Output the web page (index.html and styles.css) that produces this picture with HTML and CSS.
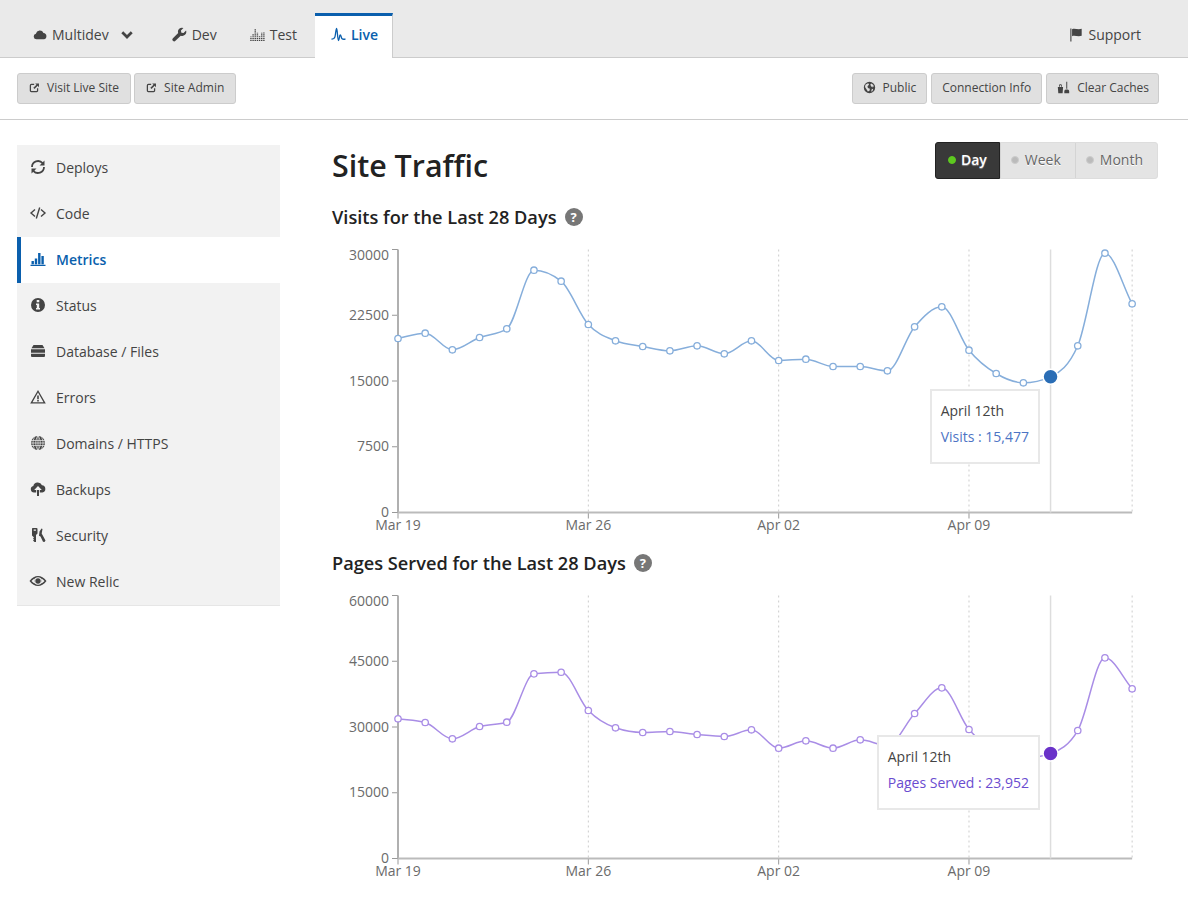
FILE: index.html
```html
<!DOCTYPE html>
<html>
    <head>
        <meta charset="utf-8">
        <title>Site Traffic</title>
        <link rel="stylesheet" href="styles.css">
    </head>
    <body>
        <svg class="defs" width="0" height="0">
            <symbol id="i-cloud" viewBox="0 0 16 16"><path d="M4 13.5a3.3 3.3 0 0 1-.7-6.5A4.6 4.6 0 0 1 12 6.2a3.7 3.7 0 0 1 .4 7.3z"/></symbol>
            <symbol id="i-chevron" viewBox="0 0 16 16"><path d="M1.5 6.5l2.2-2.2L8 8.6l4.3-4.3 2.2 2.2L8 13z"/></symbol>
            <symbol id="i-wrench" viewBox="0 0 16 16"><path d="M15 3.8l-2.7 2.7-2.3-.5-.5-2.3L12.2 1a4.3 4.3 0 0 0-5.6 5.4L1 12a1.9 1.9 0 0 0 2.7 2.7l5.6-5.5A4.3 4.3 0 0 0 15 3.8z"/></symbol>
            <symbol id="i-test" viewBox="0 0 16 16"><path class="dots" d="M1 15V10M3.3 15V7M5.6 15V2M7.9 15V6M10.2 15V9M12.5 15V6M14.8 15V5"/></symbol>
            <symbol id="i-pulse" viewBox="0 0 16 16"><path class="thin" d="M.5 13c2 0 3-.5 3.700-2.500s1-9 1.800-9 1 13 2 13 .8-6 1.800-6 1 3 2 4 2 .5 3.700.5"/></symbol>
            <symbol id="i-link" viewBox="0 0 16 16"><path class="thin2" d="M7.500 3.500h-4A1.500 1.500 0 0 0 2 5v7.500A1.500 1.500 0 0 0 3.500 14H11a1.500 1.500 0 0 0 1.500-1.500V9"/><path d="M9 2h5.500v5.500L12.600 5.600 8 10.200 6.300 8.500 10.900 3.900z"/></symbol>
            <symbol id="i-earth" viewBox="0 0 16 16"><path fill-rule="evenodd" d="M8 1a7 7 0 1 1 0 14A7 7 0 0 1 8 1zM3 4.500L5.500 3l2 .5-.5 1.500L5.500 6.500 6 8.500 8.500 9.500 8 12 6 13 4.500 10.500 2.500 7.500zM10 3l2.500 1.500 1 2.500-1.500-.5-.5 1.500-1.500-1.500-1-2zM11 9.500l1.500.5-1 2.500-1.500.5z"/></symbol>
            <symbol id="i-broom" viewBox="0 0 16 16"><path d="M1 7.500h6.500L6.900 15H1.600zM2.500 7V5.200A1.300 1.300 0 0 1 3.800 4h.9a1.300 1.300 0 0 1 1.300 1.200V7H5V5.200H3.500V7zM11.400 1h1.200v8.500h-1.200zM9 15v-2.500a2 2 0 0 1 2-2h2a2 2 0 0 1 2 2V15z"/></symbol>
            <symbol id="i-flag" viewBox="0 0 16 16"><path d="M1.500 1h1.300v15H1.500zM3.500 2C6.500.5 10 3 14.500 1.500v8C10 11 6.500 8.500 3.500 10z"/></symbol>
            <symbol id="i-refresh" viewBox="0 0 16 16"><path class="thin2" d="M2 8A6 6 0 0 1 12.600 4.200M14 8A6 6 0 0 1 3.400 11.800"/><path d="M14.500 1.500v5H9.500zM1.500 14.500v-5h5z"/></symbol>
            <symbol id="i-code" viewBox="0 0 16 16"><path class="thin" d="M5 4.500L1 8l4 3.500M11 4.500L15 8l-4 3.500M9.700 2.500l-3.400 11"/></symbol>
            <symbol id="i-bars" viewBox="0 0 16 16"><path d="M.5 13.800h15V15H.5zM1.500 10h2.400v3.300H1.500zM4.800 7.500h2.400v5.800H4.800zM8.100 2h2.400v11.300H8.100zM11.400 5h2.400v8.300h-2.400z"/></symbol>
            <symbol id="i-info" viewBox="0 0 16 16"><path fill-rule="evenodd" d="M8 1a7 7 0 1 1 0 14A7 7 0 0 1 8 1zM6.700 3v2.300h2.600V3zM6 6.500v1.500h.8v3H6v1.500h4V11h-.8V6.500z"/></symbol>
            <symbol id="i-database" viewBox="0 0 16 16"><path d="M3.500 2h9L14.500 5.300h-13zM1 6.300h14v3.400H1zM1 10.700h14v2.300a1 1 0 0 1-1 1H2a1 1 0 0 1-1-1z"/></symbol>
            <symbol id="i-warning" viewBox="0 0 16 16"><path fill-rule="evenodd" d="M8 1l7.800 13.500H.2zM8 3.600L2.500 13.200h11zM7.200 6.500h1.600v3.800H7.200zM7.200 11h1.600v1.500H7.200z"/></symbol>
            <symbol id="i-globe" viewBox="0 0 16 16"><circle cx="8" cy="8" r="7"/><path class="lines" d="M1 5.500h14M1 8h14M1 10.500h14M8 1v14M8 1C5 4 5 12 8 15M8 1c3 3 3 11 0 14M4.500 2.500c-2 3-2 8 0 11M11.500 2.500c2 3 2 8 0 11"/></symbol>
            <symbol id="i-upload" viewBox="0 0 16 16"><path d="M4 11.500a3.300 3.300 0 0 1-.7-6.500A4.600 4.600 0 0 1 12 4.200a3.700 3.700 0 0 1 .4 7.300H9.800V9h2L8 5 4.200 9h2v2.500z"/><path d="M7 9h2v6H7z"/></symbol>
            <symbol id="i-keys" viewBox="0 0 16 16"><path fill-rule="evenodd" d="M2.500 1h4a1 1 0 0 1 1 1v4.500L6 8v7H4.500L3 13.500l1-1-1-1 1-1L2 8.500V2a1 1 0 0 1 .5-1zM3.700 2.500v1.200h2.200V2.500z"/><path d="M9.500 4.500L11.500 1.500l1 .5-.8 4.500 3.800 7-1 1.500-1.500-.3-2.500-5.200-1.500-.8z"/></symbol>
            <symbol id="i-eye" viewBox="0 0 18 16"><path fill-rule="evenodd" d="M.5 8C3 4.500 6 3 9 3s6 1.500 8.500 5c-2.500 3.500-5.500 5-8.500 5S3 11.500.5 8zM9 4.200A3.800 3.800 0 1 0 9 11.800 3.800 3.800 0 0 0 9 4.200zM2.500 8c1 1.200 2.100 2 3.200 2.600A4.800 4.800 0 0 1 5.700 5.400C4.600 6 3.500 6.800 2.500 8zM15.500 8c-1-1.200-2.100-2-3.200-2.600a4.800 4.800 0 0 1 0 5.200c1.100-.6 2.200-1.400 3.200-2.600z"/><circle cx="9" cy="8" r="2.700"/></symbol>
        </svg>

        <div id="tabs">
            <a class="tab tab-drop"><svg class="ico"><use href="#i-cloud"/></svg>Multidev<svg class="ico chevron"><use href="#i-chevron"/></svg></a>
            <a class="tab"><svg class="ico"><use href="#i-wrench"/></svg>Dev</a>
            <a class="tab"><svg class="ico"><use href="#i-test"/></svg>Test</a>
            <a class="tab tab-active"><svg class="ico"><use href="#i-pulse"/></svg>Live</a>
            <a class="tab tab-support"><svg class="ico"><use href="#i-flag"/></svg>Support</a>
        </div>

        <div id="toolbar">
            <div class="btn-group btn-left">
                <a class="btn"><svg class="ico-sm"><use href="#i-link"/></svg>Visit Live Site</a>
                <a class="btn"><svg class="ico-sm"><use href="#i-link"/></svg>Site Admin</a>
            </div>
            <div class="btn-group">
                <a class="btn"><svg class="ico-md"><use href="#i-earth"/></svg>Public</a>
                <a class="btn">Connection Info</a>
                <a class="btn btn-tight"><svg class="ico-md"><use href="#i-broom"/></svg>Clear Caches</a>
            </div>
        </div>

        <div id="page">
            <ul id="sidebar">
                <li><svg class="ico-nav"><use href="#i-refresh"/></svg>Deploys</li>
                <li><svg class="ico-nav"><use href="#i-code"/></svg>Code</li>
                <li class="selected"><svg class="ico-nav"><use href="#i-bars"/></svg>Metrics</li>
                <li><svg class="ico-nav"><use href="#i-info"/></svg>Status</li>
                <li><svg class="ico-nav"><use href="#i-database"/></svg>Database / Files</li>
                <li><svg class="ico-nav"><use href="#i-warning"/></svg>Errors</li>
                <li><svg class="ico-nav"><use href="#i-globe"/></svg>Domains / HTTPS</li>
                <li><svg class="ico-nav"><use href="#i-upload"/></svg>Backups</li>
                <li><svg class="ico-nav"><use href="#i-keys"/></svg>Security</li>
                <li><svg class="ico-nav"><use href="#i-eye"/></svg>New Relic</li>
            </ul>

            <div id="content">
                <div class="title-row">
                    <h1>Site Traffic</h1>
                    <div class="range">
                        <a class="range-item on"><i></i>Day</a>
                        <a class="range-item"><i></i>Week</a>
                        <a class="range-item"><i></i>Month</a>
                    </div>
                </div>

                <h2>Visits for the Last 28 Days <span class="help">?</span></h2>
                <div class="chart" id="visits">
                    <div class="tip">
                        <div class="tip-date">April 12th</div>
                        <div class="tip-value tip-visits">Visits : 15,477</div>
                    </div>
                </div>

                <h2>Pages Served for the Last 28 Days <span class="help">?</span></h2>
                <div class="chart" id="pages">
                    <div class="tip">
                        <div class="tip-date">April 12th</div>
                        <div class="tip-value tip-pages">Pages Served : 23,952</div>
                    </div>
                </div>
            </div>
        </div>

        <script src="charts.js"></script>
    </body>
</html>
```
FILE: styles.css
```css
* {
    box-sizing: border-box;
}

body {
    margin: 0;
    background: white;
    color: #444444;
    font-family: "Open Sans", sans-serif;
    font-size: 14px;
}

.defs {
    position: absolute;
}

svg {
    fill: currentColor;
}

.thin, .thin2, .dots, .lines {
    fill: none;
    stroke: currentColor;
}

.thin {
    stroke-width: 1.4;
}

.thin2 {
    stroke-width: 1.8;
}

.dots {
    stroke-width: 1.5;
    stroke-dasharray: 1.2 .8;
}

.lines {
    stroke: #f2f2f2;
    stroke-width: .7;
}

/* tabs */
#tabs {
    display: flex;
    height: 58px;
    padding: 13px 31px 0 17px;
    background: #eaeaea;
    border-bottom: 1px solid #cccccc;
}

.tab {
    display: flex;
    align-items: center;
    height: 45px;
    margin-right: 1px;
    padding: 0 16px 3px 16px;
    color: #444444;
}

.tab-drop {
    margin-right: 6px;
}

.tab-drop .ico {
    width: 14px;
}

.tab-active {
    margin-left: 1px;
    padding-right: 14px;
    padding-bottom: 6px;
    background: white;
    border-top: 3px solid #0a5fad;
    border-right: 1px solid #cccccc;
    color: #0a5fad;
    font-weight: 600;
}

.tab-support {
    margin-left: auto;
    margin-right: 0;
}

.tab-support .ico {
    width: 14px;
}

.ico {
    width: 15px;
    height: 15px;
    margin-right: 5px;
}

.tab-drop .chevron {
    margin: 0 0 0 11px;
}

/* toolbar */
#toolbar {
    display: flex;
    justify-content: space-between;
    height: 62px;
    padding: 15px 29px 15px 17px;
    border-bottom: 1px solid #cccccc;
}

.btn-group {
    display: flex;
    gap: 4px;
}

.btn {
    display: flex;
    align-items: center;
    height: 31px;
    padding: 0 10px 2px 10px;
    background: #e0e0e0;
    border: 1px solid #cccccc;
    border-radius: 3px;
    font-size: 12px;
    color: #444444;
}

.btn-tight {
    padding-right: 9px;
}

.btn-left {
    gap: 3px;
}

.btn-left .btn {
    padding: 0 11px 2px 11px;
}

.ico-sm {
    width: 11px;
    height: 11px;
    margin: 0 7px 0 0;
}

.ico-md {
    width: 13px;
    height: 13px;
    margin-right: 7px;
}

/* sidebar */
#page {
    display: flex;
    padding-left: 17px;
}

#sidebar {
    width: 263px;
    margin: 25px 0 0 0;
    padding: 0;
    align-self: flex-start;
    list-style: none;
    background: #f2f2f2;
    border-bottom: 1px solid #e6e6e6;
}

#sidebar li {
    display: flex;
    align-items: center;
    height: 46px;
    padding: 0 0 2px 8px;
    border-left: 4px solid transparent;
}

#sidebar li.selected {
    background: white;
    border-left-color: #0a5fad;
    color: #0a5fad;
    font-weight: 600;
}

.ico-nav {
    width: 18px;
    height: 16px;
    margin-right: 9px;
}

/* content */
#content {
    width: 826px;
    margin-left: 52px;
    padding-top: 22px;
}

.title-row {
    display: flex;
    justify-content: space-between;
    align-items: flex-start;
    height: 52px;
}

h1 {
    margin: 0;
    font-size: 30.4px;
    font-weight: 600;
    line-height: 48px;
    color: #222222;
}

h2 {
    display: flex;
    align-items: center;
    gap: 8px;
    height: 46px;
    margin: 0;
    font-size: 18.2px;
    font-weight: 600;
    color: #222222;
}

.help {
    width: 18px;
    height: 18px;
    border-radius: 50%;
    background: #777777;
    color: white;
    font-size: 13px;
    font-weight: 700;
    line-height: 18px;
    text-align: center;
}

.range {
    display: flex;
    height: 37px;
    background: #e4e4e4;
    border: 1px solid #dddddd;
    border-radius: 3px;
}

.range-item {
    display: flex;
    align-items: center;
    padding: 0 14px 2px 10px;
    border-left: 1px solid #d4d4d4;
    color: #666666;
    text-shadow: 0 1px 0 white;
}

.range-item i {
    width: 8px;
    height: 8px;
    margin-right: 6px;
    border-radius: 50%;
    background: #bbbbbb;
    border: 1px solid #cccccc;
}

.range-item.on {
    margin: -1px 0 -1px -1px;
    padding: 0 12px 2px 12px;
    background: #393939;
    border: 1px solid #222222;
    border-radius: 3px 0 0 3px;
    color: white;
    font-weight: 600;
    text-shadow: 0 1px 1px #888888;
}

.range-item.on i {
    margin-right: 5px;
    background: #5dc91f;
    border-color: #5dc91f;
}

/* charts */
.chart {
    position: relative;
    height: 300px;
}

.chart svg {
    display: block;
}

.axis-y {
    stroke: #b0b0b0;
    stroke-width: 2;
    fill: none;
}

.axis-x {
    stroke: #bbbbbb;
    stroke-width: 2;
}

.tick {
    stroke: #999999;
    stroke-width: 1;
}

.grid {
    stroke: #cccccc;
    stroke-width: 1;
    stroke-dasharray: 2 3;
}

.cursor {
    stroke: #dddddd;
    stroke-width: 1.5;
}

.label {
    fill: #6b6b6b;
    font-size: 14px;
}

.line {
    fill: none;
    stroke-width: 1.5;
}

.line-visits {
    stroke: #86aedb;
}

.line-pages {
    stroke: #a98de6;
}

.point {
    fill: white;
    stroke-width: 1.3;
}

.active {
    stroke: white;
    stroke-width: 1.5;
}

.tip {
    position: absolute;
    top: 149px;
    right: 118px;
    height: 75px;
    padding: 9px 9px;
    background: white;
    border: 2px solid #e8e8e8;
    font-size: 14px;
    white-space: nowrap;
}

.tip-date {
    height: 26px;
    line-height: 22px;
    color: #444444;
}

.tip-value {
    line-height: 22px;
}

.tip-visits {
    color: #4d74c4;
}

.tip-pages {
    color: #6a4cd0;
}
```
FILE: charts.js
```js
var LEFT = 66, TOP = 9.5, HEIGHT = 263, STEP = 27.19;

var visits = [19848, 20453, 18559, 19962, 20955, 27639, 26384, 21445, 19586, 18935,
              18445, 19015, 18103, 19586, 17338, 17487, 16654, 16654, 16164, 21183,
              23464, 18514, 15856, 14795, 15477, 19015, 29578, 23806];

var pages = [31866, 31022, 27304, 30109, 31090, 42130, 42495, 33759, 29813, 28741,
             28969, 28284, 27828, 29356, 25159, 26847, 25159, 27075, 25775, 33075,
             38937, 29425, 24500, 22900, 23952, 29197, 45780, 38710];

var days = {0: "Mar 19", 7: "Mar 26", 14: "Apr 02", 21: "Apr 09"};

function sign(n) {
    return n < 0 ? -1 : 1;
}

// monotone curve, so the peaks don't overshoot the points
function linePath(pts) {
    var slopes = [], tans = [], i;
    for (i = 0; i < pts.length - 1; i++) {
        slopes.push((pts[i + 1][1] - pts[i][1]) / STEP);
    }
    tans.push(slopes[0]);
    for (i = 1; i < pts.length - 1; i++) {
        var a = slopes[i - 1], b = slopes[i];
        tans.push((sign(a) + sign(b)) * Math.min(Math.abs(a), Math.abs(b), Math.abs(a + b) / 4));
    }
    tans.push(slopes[slopes.length - 1]);

    var d = "M" + pts[0][0] + "," + pts[0][1];
    for (i = 0; i < pts.length - 1; i++) {
        var h = STEP / 3;
        d += "C" + (pts[i][0] + h) + "," + (pts[i][1] + tans[i] * h) + " " +
             (pts[i + 1][0] - h) + "," + (pts[i + 1][1] - tans[i + 1] * h) + " " +
             pts[i + 1][0] + "," + pts[i + 1][1];
    }
    return d;
}

function drawChart(id, data, max, color, dotColor, kind) {
    var bottom = TOP + HEIGHT, right = LEFT + STEP * 27;
    var s = '<svg width="826" height="300">';
    var i, x, y;

    // grid
    for (i in days) {
        x = LEFT + STEP * i;
        if (i > 0) {
            s += '<line class="grid" x1="' + x + '" x2="' + x + '" y1="' + TOP + '" y2="' + bottom + '"/>';
        }
        s += '<line class="tick" x1="' + x + '" x2="' + x + '" y1="' + bottom + '" y2="' + (bottom + 6) + '"/>';
        s += '<text class="label" text-anchor="middle" x="' + x + '" y="' + (bottom + 17) + '">' + days[i] + '</text>';
    }
    s += '<line class="grid" x1="' + right + '" x2="' + right + '" y1="' + TOP + '" y2="' + bottom + '"/>';

    // y axis, the top label gets pushed down inside the plot
    for (i = 0; i <= 4; i++) {
        y = bottom - HEIGHT * i / 4;
        s += '<line class="tick" x1="' + (LEFT - 6) + '" x2="' + LEFT + '" y1="' + y + '" y2="' + y + '"/>';
        s += '<text class="label" text-anchor="end" x="' + (LEFT - 9) + '" y="' + (y + (i == 4 ? 10 : 4.5)) + '">' + (max * i / 4) + '</text>';
    }
    s += '<line class="axis-y" x1="' + LEFT + '" x2="' + LEFT + '" y1="' + TOP + '" y2="' + bottom + '"/>';
    s += '<line class="axis-x" x1="' + LEFT + '" x2="' + right + '" y1="' + bottom + '" y2="' + bottom + '"/>';

    var pts = [];
    for (i = 0; i < data.length; i++) {
        pts.push([LEFT + STEP * i, bottom - data[i] / max * HEIGHT]);
    }

    // hover line sits on day 24
    s += '<line class="cursor" x1="' + pts[24][0] + '" x2="' + pts[24][0] + '" y1="' + TOP + '" y2="' + bottom + '"/>';
    s += '<path class="line line-' + kind + '" d="' + linePath(pts) + '"/>';
    for (i = 0; i < pts.length; i++) {
        if (i == 24) {
            s += '<circle class="active" cx="' + pts[i][0] + '" cy="' + pts[i][1] + '" r="7.5" style="fill:' + dotColor + '"/>';
        } else {
            s += '<circle class="point" cx="' + pts[i][0] + '" cy="' + pts[i][1] + '" r="3.2" style="stroke:' + color + '"/>';
        }
    }
    s += '</svg>';

    var box = document.getElementById(id);
    box.insertAdjacentHTML('afterbegin', s);
}

drawChart('visits', visits, 30000, '#86aedb', '#2a6db5', 'visits');
drawChart('pages', pages, 60000, '#a98de6', '#6a32c9', 'pages');
```
